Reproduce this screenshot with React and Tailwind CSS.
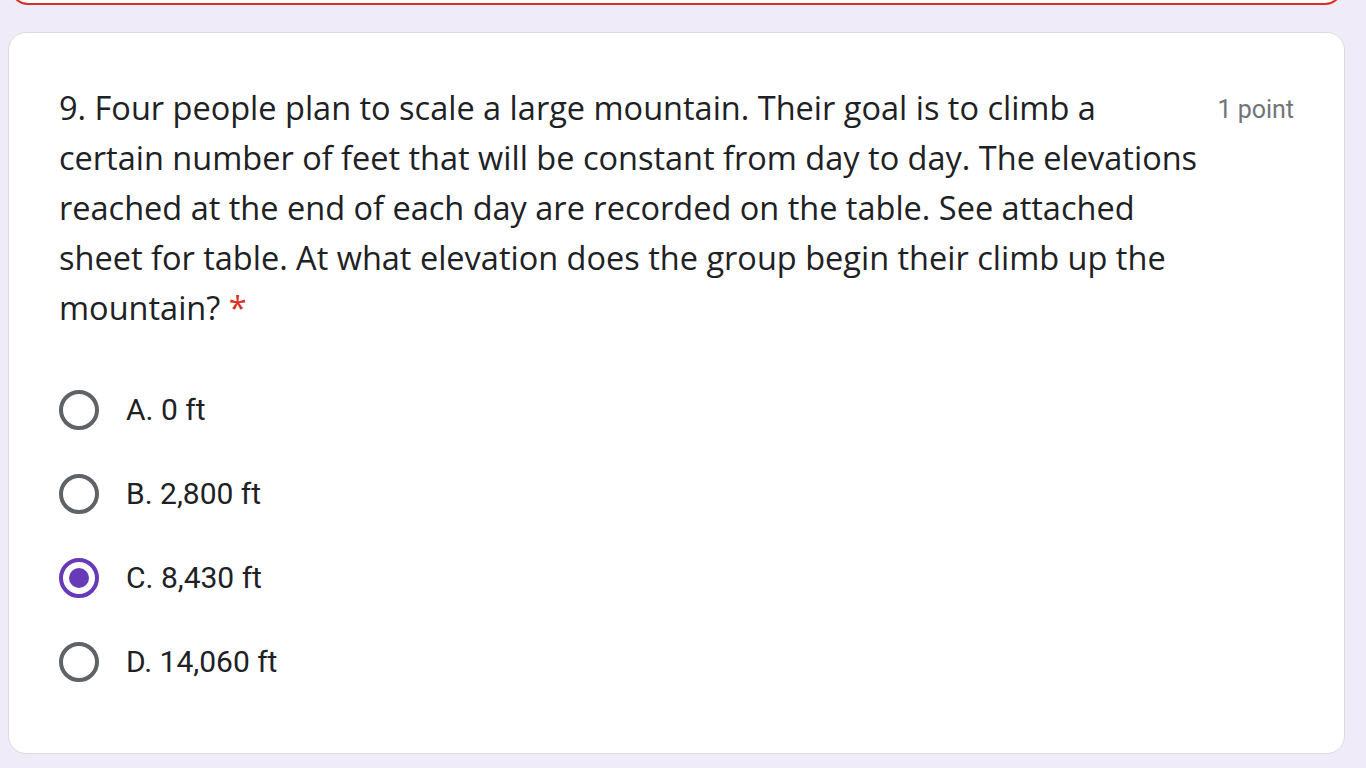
import React from 'react';

const options = ['A. 0 ft', 'B. 2,800 ft', 'C. 8,430 ft', 'D. 14,060 ft'];

const lines = [
  '9. Four people plan to scale a large mountain. Their goal is to climb a',
  'certain number of feet that will be constant from day to day. The elevations',
  'reached at the end of each day are recorded on the table. See attached',
  'sheet for table. At what elevation does the group begin their climb up the',
];

const Radio = ({ checked }) =>
  checked ? (
    <div className="w-10 h-10 rounded-full border-4 border-[#673ab7] flex items-center justify-center shrink-0">
      <div className="w-5 h-5 rounded-full bg-[#673ab7]" />
    </div>
  ) : (
    <div className="w-10 h-10 rounded-full border-4 border-[#5f6368] shrink-0" />
  );

export default function App() {
  return (
    <div className="min-h-[768px] bg-[#f0ebf8] overflow-hidden pl-2 pr-[21px]">
      <div className="mx-[2px] -mt-[20px] h-[25px] rounded-b-[18px] border-2 border-[#d93025] bg-white" />
      <div className="mt-[27px] h-[722px] rounded-[18px] border border-[#dadce0] bg-white pl-[50px] pr-[50px] pt-[50px]">
        <div className="flex items-start justify-between">
          <div className="text-[32.5px] leading-[50px] text-[#202124] font-['Open_Sans',sans-serif] whitespace-nowrap">
            {lines.map((l) => (
              <div key={l}>{l}</div>
            ))}
            <div>
              mountain? <span className="text-[#d93025]">*</span>
            </div>
          </div>
          <div className="shrink-0 pt-[12px] text-[25px] leading-[30px] text-[#70757a] font-['Roboto',sans-serif]">
            1 point
          </div>
        </div>
        <div className="mt-[57px] flex flex-col gap-[44px]">
          {options.map((o, i) => (
            <div key={o} className="flex items-center gap-[27px]">
              <Radio checked={i === 2} />
              <span className="text-[30px] leading-[40px] text-[#202124] font-['Roboto',sans-serif]">{o}</span>
            </div>
          ))}
        </div>
      </div>
    </div>
  );
}
